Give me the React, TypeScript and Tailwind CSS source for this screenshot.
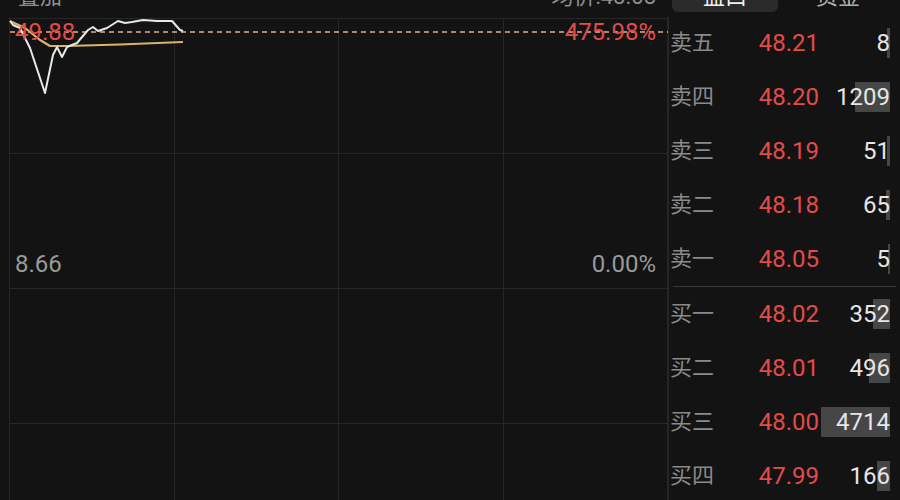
import React from "react";

// ── Order book data ─────────────────────────────────────────────────────────
type Level = { label: string; price: string; vol: string; bar: number };

const ASKS: Level[] = [
  { label: "卖五", price: "48.21", vol: "8", bar: 3 },
  { label: "卖四", price: "48.20", vol: "1209", bar: 35 },
  { label: "卖三", price: "48.19", vol: "51", bar: 3 },
  { label: "卖二", price: "48.18", vol: "65", bar: 4 },
  { label: "卖一", price: "48.05", vol: "5", bar: 2 },
];

const BIDS: Level[] = [
  { label: "买一", price: "48.02", vol: "352", bar: 17 },
  { label: "买二", price: "48.01", vol: "496", bar: 21 },
  { label: "买三", price: "48.00", vol: "4714", bar: 69 },
  { label: "买四", price: "47.99", vol: "166", bar: 13 },
];

// ── Chart paths (page px, shifted to grid origin in toPath) ─────────────────
const PRICE_PTS: [number, number][] = [
  [10, 21], [13, 25], [20, 28], [30, 48], [45, 93], [53, 55], [57, 47],
  [62, 57], [67, 47], [77, 43], [88, 30], [93, 27], [98, 31], [107, 28],
  [118, 21], [125, 23], [132, 22], [143, 20], [157, 21], [172, 21], [180, 30], [183, 31],
];
const AVG_PTS: [number, number][] = [
  [10, 21], [25, 28], [40, 40], [50, 46], [67, 46], [120, 44.5], [183, 42],
];

const toPath = (pts: [number, number][]) =>
  pts.map(([x, y], i) => `${i ? "L" : "M"}${x - 9} ${y - 18}`).join(" ");

const FONT = { fontFamily: 'Roboto, "Noto Sans CJK SC", sans-serif' };

function Row({ l }: { l: Level }) {
  return (
    <div className="flex items-center h-[54px] shrink-0">
      <span className="w-[77px] pl-[1px] text-[22px] text-[#8a8a8a] leading-none">{l.label}</span>
      <span className="w-[73px] text-right text-[24px] text-[#e34b4b] leading-none">{l.price}</span>
      <div className="relative flex-1 h-full flex items-center justify-end">
        <div
          className="absolute right-0 top-[12px] h-[30px] bg-[#464646]"
          style={{ width: l.bar }}
        />
        <span className="relative text-[24px] text-[#e6e6e6] leading-none">{l.vol}</span>
      </div>
    </div>
  );
}

export default function App() {
  return (
    <div className="w-[900px] h-[500px] overflow-hidden flex bg-[#131313] select-none" style={FONT}>
      {/* ── Chart column ─────────────────────────────────────────────────── */}
      <div className="w-[668px] flex flex-col">
        <div className="h-[18px] shrink-0 flex justify-between items-start px-[18px] text-[#8f8f8f]">
          <span className="text-[22px] leading-[22px] -mt-[14px]">叠加</span>
          <span className="text-[22px] leading-[22px] -mt-[14px] mr-[-6px]">均价:48.08</span>
        </div>
        <div className="relative ml-[9px] flex-1 min-h-0">
          <div className="grid grid-cols-4 border-l border-t border-[#262626]">
            {Array.from({ length: 16 }).map((_, i) => (
              <div key={i} className="h-[135px] border-r border-b border-[#262626]" />
            ))}
          </div>

          <svg className="absolute left-0 top-0" width="659" height="482" viewBox="0 0 659 482">
            <line x1="1" y1="14" x2="659" y2="14" stroke="#e8b08a" strokeWidth="1.6" strokeDasharray="5 4" />
            <path d={toPath(AVG_PTS)} fill="none" stroke="#d8b46a" strokeWidth="2.2" strokeLinejoin="round" />
            <path d={toPath(PRICE_PTS)} fill="none" stroke="#e8e8e8" strokeWidth="2" strokeLinejoin="round" />
          </svg>

          <span className="absolute left-[6px] top-0 text-[24px] leading-[28px] text-[#e34b4b]">49.88</span>
          <span className="absolute right-[12px] top-0 text-[24px] leading-[28px] text-[#e34b4b]">475.98%</span>
          <span className="absolute left-[6px] top-[232px] text-[24px] leading-[28px] text-[#9a9a9a]">8.66</span>
          <span className="absolute right-[12px] top-[232px] text-[24px] leading-[28px] text-[#9a9a9a]">0.00%</span>
        </div>
      </div>

      {/* ── Order book ──────────────────────────────────────────────────── */}
      <div className="flex-1 flex flex-col">
        <div className="h-[16px] shrink-0 flex items-start">
          <div className="ml-[4px] w-[106px] h-[12px] bg-[#2b2b2b] rounded-b-md flex justify-center">
            <span className="text-[22px] leading-[22px] -mt-[14px] text-[#f0f0f0]">盘口</span>
          </div>
          <div className="ml-[22px] w-[76px] flex justify-center">
            <span className="text-[22px] leading-[22px] -mt-[14px] text-[#b0b0b0]">资金</span>
          </div>
        </div>
        <div className="flex-1 min-h-0 flex flex-col border-l border-[#262626] pr-[10px]">
          {ASKS.map(l => <Row key={l.label} l={l} />)}
          <div className="shrink-0 ml-[4px] mr-[-6px] h-px bg-[#3a3a3a]" />
          {BIDS.map(l => <Row key={l.label} l={l} />)}
        </div>
      </div>
    </div>
  );
}
